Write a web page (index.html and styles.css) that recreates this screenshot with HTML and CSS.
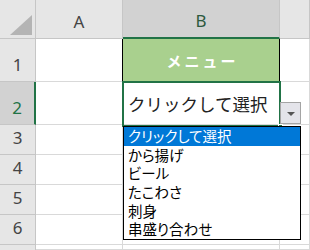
FILE: index.html
```html
<!DOCTYPE html>
<html lang="ja">
<head>
    <meta charset="UTF-8">
    <meta name="viewport" content="width=device-width, initial-scale=1.0">
    <title>メニュー選択</title>
    <link rel="stylesheet" href="styles.css">
</head>
<body>
    <div class="sheet">
        <div class="corner"><span class="corner-mark"></span></div>
        <div class="col-head">A</div>
        <div class="col-head active">B</div>
        <div class="col-head"></div>

        <div class="row-head">1</div>
        <div class="cell"></div>
        <div class="cell title">メニュー</div>
        <div class="cell"></div>

        <div class="row-head active">2</div>
        <div class="cell"></div>
        <div class="cell value">クリックして選択</div>
        <div class="cell"></div>

        <div class="row-head">3</div>
        <div class="cell"></div>
        <div class="cell"></div>
        <div class="cell"></div>

        <div class="row-head">4</div>
        <div class="cell"></div>
        <div class="cell"></div>
        <div class="cell"></div>

        <div class="row-head">5</div>
        <div class="cell"></div>
        <div class="cell"></div>
        <div class="cell"></div>

        <div class="row-head">6</div>
        <div class="cell"></div>
        <div class="cell"></div>
        <div class="cell"></div>

        <div class="row-head"></div>
        <div class="cell"></div>
        <div class="cell"></div>
        <div class="cell"></div>

        <!-- 選択枠とドロップダウン -->
        <div class="selection"><span class="handle"></span></div>
        <div class="drop-btn"></div>
        <ul class="drop-list">
            <li class="current">クリックして選択</li>
            <li>から揚げ</li>
            <li>ビール</li>
            <li>たこわさ</li>
            <li>刺身</li>
            <li>串盛り合わせ</li>
        </ul>
    </div>
</body>
</html>
```

FILE: styles.css
```css
* {
    margin: 0;
    padding: 0;
    box-sizing: border-box;
}

body {
    background: #fff;
    width: 310px;
    height: 250px;
    overflow: hidden;
    font-family: 'Noto Sans', 'Noto Sans CJK JP', sans-serif;
}

.sheet {
    position: relative;
    display: grid;
    grid-template-columns: 36px 87px 157px 1fr;
    grid-template-rows: 39px 43px 43px 30px 30px 30px 30px 5px;
    width: 310px;
    height: 250px;
    overflow: hidden;
}

.corner,
.col-head,
.row-head {
    background: #e6e6e6;
    border-right: 1px solid #c6c6c6;
    border-bottom: 1px solid #c6c6c6;
    color: #444;
    font-size: 17px;
    display: flex;
    justify-content: center;
    align-items: flex-end;
    padding-bottom: 5px;
}

.corner {
    position: relative;
}

.corner-mark {
    position: absolute;
    right: 3px;
    bottom: 3px;
    width: 0;
    height: 0;
    border-left: 22px solid transparent;
    border-bottom: 20px solid #b4b4b4;
}

.col-head.active {
    background: #d2d2d2;
    color: #2d5a3e;
    border-bottom: 2px solid #217346;
}

.row-head.active {
    background: #d2d2d2;
    color: #217346;
    border-right: 2px solid #217346;
}

.cell {
    border-right: 1px solid #d9d9d9;
    border-bottom: 1px solid #d9d9d9;
}

.title {
    background: #a9d08e;
    border-left: 1px solid #000;
    border-right: 1px solid #000;
    margin-left: -1px;
    color: #fff;
    font-family: 'Noto Sans CJK JP', sans-serif;
    font-weight: bold;
    font-size: 15px;
    letter-spacing: 3px;
    display: flex;
    justify-content: center;
    align-items: center;
    padding-left: 3px;
}

.value {
    font-family: 'Noto Sans CJK JP', sans-serif;
    font-size: 17.5px;
    color: #222;
    display: flex;
    align-items: center;
    padding-left: 5px;
}

.selection {
    position: absolute;
    left: 122px;
    top: 81px;
    width: 159px;
    height: 46px;
    border: 2px solid #217346;
}

.handle {
    position: absolute;
    right: -4px;
    bottom: -4px;
    width: 5px;
    height: 5px;
    background: #217346;
    border: 1px solid #fff;
}

.drop-btn {
    position: absolute;
    left: 280px;
    top: 102px;
    width: 21px;
    height: 22px;
    background: #e4e4ea;
    border: 1px solid #a4a4a4;
}

.drop-btn::after {
    content: '';
    position: absolute;
    left: 6px;
    top: 9px;
    border-left: 4px solid transparent;
    border-right: 4px solid transparent;
    border-top: 4px solid #555;
}

.drop-list {
    position: absolute;
    left: 123px;
    top: 126px;
    width: 178px;
    height: 114px;
    background: #fff;
    border: 1px solid #000;
    list-style: none;
    font-family: 'Noto Sans CJK JP', sans-serif;
    font-feature-settings: 'palt';
    font-size: 14.5px;
    color: #000;
}

.drop-list li {
    height: 18.67px;
    line-height: 18.67px;
    padding-left: 4px;
    white-space: nowrap;
}

.drop-list li.current {
    background: #0078d7;
    color: #fff;
}
```
